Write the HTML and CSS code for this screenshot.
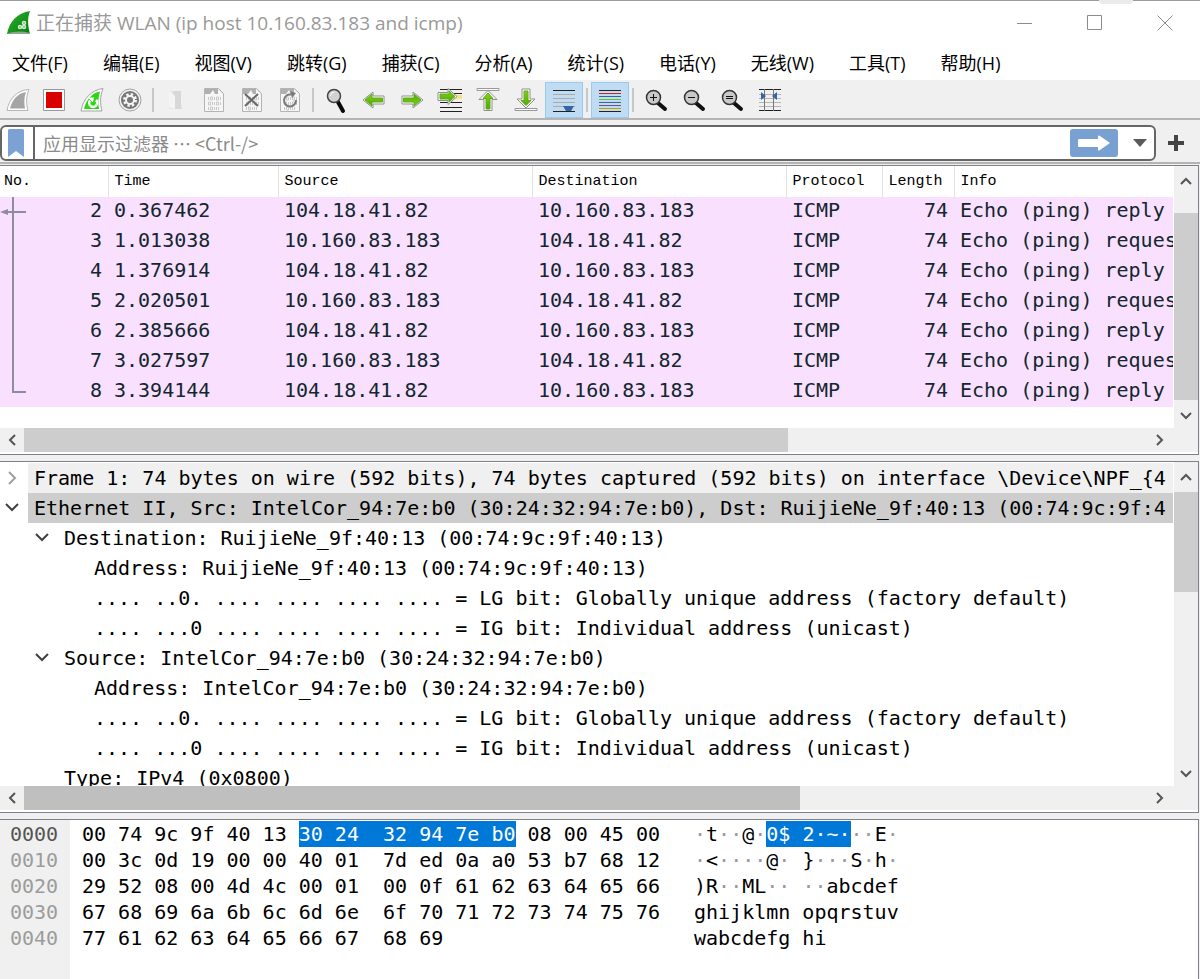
FILE: index.html
```
<!DOCTYPE html>
<html lang="zh-CN">
<head>
    <meta charset="UTF-8">
    <meta name="viewport" content="width=device-width, initial-scale=1.0">
    <title>正在捕获 WLAN</title>
    <link rel="stylesheet" href="styles.css">
</head>
<body>
    <header class="titlebar">
        <svg class="logo" width="24" height="24" viewBox="0 0 24 24">
            <defs>
                <linearGradient id="fin" x1="0" y1="0" x2="1" y2="1">
                    <stop offset="0" stop-color="#2bb52b"/>
                    <stop offset="1" stop-color="#067a10"/>
                </linearGradient>
            </defs>
            <path d="M0 23C2 11 10 2 23 0c-3 8-2 15 0 23z" fill="url(#fin)"/>
            <path d="M0 23c7-3 15-3 23-1v1z" fill="#8ca68c"/>
            <g fill="#3a9a3a" stroke="#d4ecd4" stroke-width="1.500">
                <circle cx="13" cy="16" r="1.500"/>
                <circle cx="17" cy="16" r="1.500"/>
                <circle cx="17" cy="12" r="1.500"/>
            </g>
        </svg>
        <span class="title">正在捕获 WLAN (ip host 10.160.83.183 and icmp)</span>
        <div class="window-buttons">
            <button type="button" aria-label="最小化"><svg width="16" height="16" viewBox="0 0 16 16"><path d="M0 8.500h15"/></svg></button>
            <button type="button" aria-label="最大化"><svg width="16" height="16" viewBox="0 0 16 16"><path d="M.5.5h14v14H.5z"/></svg></button>
            <button type="button" aria-label="关闭"><svg width="16" height="16" viewBox="0 0 16 16"><path d="M.5.5l15 15M15.500.5l-15 15"/></svg></button>
        </div>
        <span class="grip"></span>
    </header>

    <nav class="menu">
        <button type="button">文件(F)</button>
        <button type="button">编辑(E)</button>
        <button type="button">视图(V)</button>
        <button type="button">跳转(G)</button>
        <button type="button">捕获(C)</button>
        <button type="button">分析(A)</button>
        <button type="button">统计(S)</button>
        <button type="button">电话(Y)</button>
        <button type="button">无线(W)</button>
        <button type="button">工具(T)</button>
        <button type="button">帮助(H)</button>
    </nav>

    <!-- shared icon shapes -->
    <svg class="defs" width="0" height="0">
        <defs>
            <linearGradient id="green" x1="0" y1="0" x2="0" y2="1">
                <stop offset="0" stop-color="#86cf1c"/>
                <stop offset="1" stop-color="#4fa80c"/>
            </linearGradient>
            <symbol id="arrow" viewBox="0 0 24 24">
                <path d="M1 12L11 4v4h11v8H11v4z" fill="#fff" stroke="#8f8f8f" stroke-linejoin="round"/>
                <path d="M3 12l7-6v4h10.500v4H10v4z" fill="url(#green)" stroke="#5cae10"/>
            </symbol>
            <symbol id="doc" viewBox="0 0 24 24">
                <path d="M2.500.5h14l5 5v18h-19z" fill="#f6f6f6" stroke="#b4b4b4"/>
                <path d="M3 1h13l5 5H3z" fill="#b0b0b0"/>
                <path d="M8 6l3-4 2 4zM16 1v5h5z" fill="#f6f6f6"/>
                <path d="M6.500 9v3M8.500 9h2v3h-2zM12.500 9v3M14.500 9h2v3h-2zM18.500 9v3M6.500 14h2v3h-2zM10.500 14v3M12.500 14v3M14.500 14h2v3h-2zM18.500 14v3M6.500 19v3M8.500 19h2v3h-2zM12.500 19v3M14.500 19v3M16.500 19v3" fill="none" stroke="#c8c8c8"/>
            </symbol>
            <symbol id="lens" viewBox="0 0 24 24">
                <path d="M14 15l7 6" stroke="#111" stroke-width="4" stroke-linecap="round"/>
                <circle cx="9.500" cy="9.500" r="7" fill="#c9c9c9" stroke="#333" stroke-width="1.500"/>
            </symbol>
        </defs>
    </svg>

    <div class="toolbar">
        <button type="button" aria-label="开始捕获"><svg viewBox="0 0 24 24"><path d="M3 22.500C5 11 13 2 25 1.500c-3 7-3 14-1 21z" fill="#fff" stroke="#b5b5b5"/><path d="M6 20.500C8 12 14 5 22 4c-2 5-2 11-1 16.500z" fill="#a5a5a5"/></svg></button>
        <button type="button" aria-label="停止捕获"><svg viewBox="0 0 24 24"><path d="M1.500 1.500h21v21h-21z" fill="#fff" stroke="#999"/><path d="M4 4h16v16H4z" fill="#d90000"/></svg></button>
        <button type="button" aria-label="重新开始捕获"><svg viewBox="0 0 24 24"><path d="M1 23C3 11 11 2 23 .5c-3 8-3 15-1 22.500z" fill="#fff" stroke="#a5a5a5"/><path d="M4 21C6 12 12 5 20 3.500c-2 6-2 12-1 17.500z" fill="#2bd612"/><path d="M10 12.500a4 4 0 1 0 6-.5" fill="none" stroke="#fff" stroke-width="2.500"/><path d="M8 9.500h6l-1 5z" fill="#fff"/></svg></button>
        <button type="button" aria-label="捕获选项"><svg viewBox="0 0 24 24"><circle cx="12" cy="12" r="11" fill="#f2f2f2" stroke="#a2a2a2"/><circle cx="12" cy="12" r="9" fill="#777"/><circle cx="12" cy="12" r="5.500" fill="none" stroke="#f4f4f4" stroke-width="3" stroke-dasharray="2.320 2"/><circle cx="12" cy="12" r="4" fill="#777" stroke="#f4f4f4" stroke-width="2"/></svg></button>
        <span class="sep"></span>
        <button type="button" aria-label="打开"><svg viewBox="0 0 24 24"><path d="M5 3h9v18H5z" fill="#e8e8e8"/><path d="M9 3h8v14l1 4h-8z" fill="#d8d8d8"/><path d="M5 3l6 5v13l-6-2z" fill="#f4f4f4"/></svg></button>
        <button type="button" aria-label="保存"><svg><use href="#doc"/></svg></button>
        <button type="button" aria-label="关闭文件"><svg viewBox="0 0 24 24"><use href="#doc"/><path d="M5 6l13 12M18 6L5 18" stroke="#686868" stroke-width="2"/></svg></button>
        <button type="button" aria-label="重新加载"><svg viewBox="0 0 24 24"><use href="#doc"/><path d="M13 6.500A6 6 0 1 0 18 12" fill="none" stroke="#7a7a7a" stroke-width="2"/><path d="M12 3l6 2-4 5z" fill="#7a7a7a"/></svg></button>
        <span class="sep"></span>
        <button type="button" aria-label="查找"><svg viewBox="0 0 24 24"><path d="M14 14l5 9" stroke="#0a0a0a" stroke-width="4" stroke-linecap="round"/><circle cx="10" cy="8" r="6.500" fill="#d2d2d2" stroke="#444" stroke-width="1.500"/><path d="M6.500 8a4 4 0 0 1 4-4" fill="none" stroke="#fff"/></svg></button>
        <button type="button" aria-label="后退"><svg><use href="#arrow"/></svg></button>
        <button type="button" aria-label="前进"><svg viewBox="0 0 24 24"><use href="#arrow" transform="rotate(180 12 12)"/></svg></button>
        <button type="button" aria-label="转到分组"><svg viewBox="0 0 24 24"><path d="M2 1.500h22M2 5.500h22M2 14.500h22M2 19.500h22M2 23.500h22" stroke="#222"/><path d="M16 7h8v4h-8z" fill="#fbe27a"/><path d="M19 8.500L10 .5v4H0v8h10v4z" fill="#fff" stroke="#8f8f8f"/><path d="M17 8.500l-6-5.500v3H2v5h9v3z" fill="url(#green)" stroke="#5cae10"/></svg></button>
        <button type="button" aria-label="首个分组"><svg viewBox="0 0 24 24"><path d="M1 .5h22v2H1z" fill="#fff" stroke="#999"/><path d="M12 2.500l9 9h-5v11H8v-11H3z" fill="#fff" stroke="#8f8f8f"/><path d="M12 5l5 5.500h-3V21h-4V10.500H7z" fill="url(#green)" stroke="#5cae10"/></svg></button>
        <button type="button" aria-label="最后分组"><svg viewBox="0 0 24 24"><path d="M1 20.500h22v2H1z" fill="#fff" stroke="#999"/><path d="M12 20l9-9h-5V1H8v10H3z" fill="#fff" stroke="#8f8f8f"/><path d="M12 17.500l5-5h-3V3h-4v9.500H7z" fill="url(#green)" stroke="#5cae10"/></svg></button>
        <button type="button" class="active" aria-label="自动滚动"><svg viewBox="0 0 24 24"><path d="M1 2.500h22M1 23.500h22" stroke="#222"/><path d="M1 6.500h22M1 10.500h22M1 14.500h22M1 18.500h22" stroke="#aaaca6"/><path d="M11 18h11l-3 5h-5z" fill="#3465a4"/></svg></button>
        <span class="sep"></span>
        <button type="button" class="active" aria-label="着色"><svg viewBox="0 0 24 24"><path d="M1 2.500h22M1 23.500h22" stroke="#222"/><path d="M1 5.500h22" stroke="#d02020"/><path d="M1 8.500h22" stroke="#3465a4"/><path d="M1 11.500h22" stroke="#60c820"/><path d="M1 14.500h22" stroke="#3465a4"/><path d="M1 17.500h22" stroke="#75507b"/><path d="M1 20.500h22" stroke="#c4a000"/></svg></button>
        <span class="sep"></span>
        <button type="button" aria-label="放大"><svg viewBox="0 0 24 24"><use href="#lens"/><path d="M6 9.500h7M9.500 6v7" stroke="#111"/></svg></button>
        <button type="button" aria-label="缩小"><svg viewBox="0 0 24 24"><use href="#lens"/><path d="M6 9.500h7" stroke="#111"/></svg></button>
        <button type="button" aria-label="正常大小"><svg viewBox="0 0 24 24"><use href="#lens"/><path d="M6 8.500h7M6 10.500h7" stroke="#111"/></svg></button>
        <button type="button" aria-label="调整列宽"><svg viewBox="0 0 24 24"><path d="M1 6.500h22M1 10.500h22M1 14.500h22M1 18.500h22" stroke="#b5b8b0"/><path d="M1 1.500h22M1 22.500h22" stroke="#222"/><path d="M6.500 1v22M15.500 1v22" stroke="#777"/><path d="M3 4l5 4-5 4zM19 4l-5 4 5 4z" fill="#3465a4"/></svg></button>
    </div>

    <form class="filterbar">
        <div class="filter">
            <button type="button" class="bookmark" aria-label="书签"><svg width="16" height="28" viewBox="0 0 16 28"><path d="M0 1.500Q0 0 1.500 0h13Q16 0 16 1.500V28l-8-6-8 6z" fill="#7ba2d2"/></svg></button>
            <input type="text" aria-label="显示过滤器" placeholder="应用显示过滤器 ⋯ &lt;Ctrl-/&gt;">
            <button type="submit" class="apply" aria-label="应用"><svg width="32" height="16" viewBox="0 0 32 16"><path d="M1 4h19V1q0-1 2 0l10 7-10 7q-2 1-2 0v-3H1q-1 0-1-1V5q0-1 1-1z" fill="#fff"/></svg></button>
            <button type="button" class="history" aria-label="历史"><svg width="14" height="8" viewBox="0 0 14 8"><path d="M0 0h14L7 8z" fill="#5a5a5a"/></svg></button>
        </div>
        <button type="button" class="add" aria-label="添加"><svg width="16" height="16" viewBox="0 0 16 16"><path d="M0 8h16M8 0v16" stroke="#444" stroke-width="4"/></svg></button>
    </form>

    <section class="pane packets">
        <div class="view">
            <table>
                <colgroup>
                    <col class="c-no"><col class="c-time"><col class="c-addr"><col class="c-addr"><col class="c-proto"><col class="c-len"><col>
                </colgroup>
                <thead>
                    <tr><th>No.</th><th>Time</th><th>Source</th><th>Destination</th><th>Protocol</th><th>Length</th><th>Info</th></tr>
                </thead>
                <tbody>
                    <tr><td>2</td><td>0.367462</td><td>104.18.41.82</td><td>10.160.83.183</td><td>ICMP</td><td>74</td><td>Echo (ping) reply</td></tr>
                    <tr><td>3</td><td>1.013038</td><td>10.160.83.183</td><td>104.18.41.82</td><td>ICMP</td><td>74</td><td>Echo (ping) request</td></tr>
                    <tr><td>4</td><td>1.376914</td><td>104.18.41.82</td><td>10.160.83.183</td><td>ICMP</td><td>74</td><td>Echo (ping) reply</td></tr>
                    <tr><td>5</td><td>2.020501</td><td>10.160.83.183</td><td>104.18.41.82</td><td>ICMP</td><td>74</td><td>Echo (ping) request</td></tr>
                    <tr><td>6</td><td>2.385666</td><td>104.18.41.82</td><td>10.160.83.183</td><td>ICMP</td><td>74</td><td>Echo (ping) reply</td></tr>
                    <tr><td>7</td><td>3.027597</td><td>10.160.83.183</td><td>104.18.41.82</td><td>ICMP</td><td>74</td><td>Echo (ping) request</td></tr>
                    <tr><td>8</td><td>3.394144</td><td>104.18.41.82</td><td>10.160.83.183</td><td>ICMP</td><td>74</td><td>Echo (ping) reply</td></tr>
                </tbody>
            </table>
            <svg class="related" width="27" height="210" viewBox="0 0 27 210"><path d="M13 0v195h13M6 15h20" fill="none" stroke="#8f8c9e" stroke-width="2"/><path d="M0 15l8-3v6z" fill="#8f8c9e"/></svg>
        </div>
        <div class="vbar">
            <button type="button" aria-label="上"><svg width="12" height="8" viewBox="0 0 12 8"><path d="M1 7l5-5 5 5"/></svg></button>
            <div class="track"><div class="thumb" style="margin-top: 17px; height: 90%"></div></div>
            <button type="button" aria-label="下"><svg width="12" height="8" viewBox="0 0 12 8"><path d="M1 1l5 5 5-5"/></svg></button>
        </div>
        <div class="hbar">
            <button type="button" aria-label="左"><svg width="8" height="12" viewBox="0 0 8 12"><path d="M7 1L2 6l5 5"/></svg></button>
            <div class="track"><div class="thumb" style="width: 68%"></div></div>
            <button type="button" aria-label="右"><svg width="8" height="12" viewBox="0 0 8 12"><path d="M1 1l5 5-5 5"/></svg></button>
        </div>
    </section>

    <section class="pane details">
        <div class="view">
            <ul class="tree">
                <li class="shaded"><button type="button" class="closed" aria-label="展开"><svg width="14" height="14" viewBox="0 0 14 14"><path d="M4 1l6 6-6 6"/></svg></button><span>Frame 1: 74 bytes on wire (592 bits), 74 bytes captured (592 bits) on interface \Device\NPF_{4</span></li>
                <li class="selected"><button type="button" aria-label="折叠"><svg width="14" height="14" viewBox="0 0 14 14"><path d="M1 3l6 6 6-6"/></svg></button><span>Ethernet II, Src: IntelCor_94:7e:b0 (30:24:32:94:7e:b0), Dst: RuijieNe_9f:40:13 (00:74:9c:9f:4</span></li>
                <li class="level2"><button type="button" aria-label="折叠"><svg width="14" height="14" viewBox="0 0 14 14"><path d="M1 3l6 6 6-6"/></svg></button><span>Destination: RuijieNe_9f:40:13 (00:74:9c:9f:40:13)</span></li>
                <li class="level3"><span>Address: RuijieNe_9f:40:13 (00:74:9c:9f:40:13)</span></li>
                <li class="level3"><span>.... ..0. .... .... .... .... = LG bit: Globally unique address (factory default)</span></li>
                <li class="level3"><span>.... ...0 .... .... .... .... = IG bit: Individual address (unicast)</span></li>
                <li class="level2"><button type="button" aria-label="折叠"><svg width="14" height="14" viewBox="0 0 14 14"><path d="M1 3l6 6 6-6"/></svg></button><span>Source: IntelCor_94:7e:b0 (30:24:32:94:7e:b0)</span></li>
                <li class="level3"><span>Address: IntelCor_94:7e:b0 (30:24:32:94:7e:b0)</span></li>
                <li class="level3"><span>.... ..0. .... .... .... .... = LG bit: Globally unique address (factory default)</span></li>
                <li class="level3"><span>.... ...0 .... .... .... .... = IG bit: Individual address (unicast)</span></li>
                <li class="leaf"><span>Type: IPv4 (0x0800)</span></li>
            </ul>
        </div>
        <div class="vbar">
            <button type="button" aria-label="上"><svg width="12" height="8" viewBox="0 0 12 8"><path d="M1 7l5-5 5 5"/></svg></button>
            <div class="track"><div class="thumb" style="height: 37%"></div></div>
            <button type="button" aria-label="下"><svg width="12" height="8" viewBox="0 0 12 8"><path d="M1 1l5 5 5-5"/></svg></button>
        </div>
        <div class="hbar">
            <button type="button" aria-label="左"><svg width="8" height="12" viewBox="0 0 8 12"><path d="M7 1L2 6l5 5"/></svg></button>
            <div class="track"><div class="thumb hover" style="width: 69%"></div></div>
            <button type="button" aria-label="右"><svg width="8" height="12" viewBox="0 0 8 12"><path d="M1 1l5 5-5 5"/></svg></button>
        </div>
    </section>

    <section class="bytes">
<pre class="offsets"><b>0000</b>
0010
0020
0030
0040</pre>
<pre class="hex">00 74 9c 9f 40 13 <mark>30 24  32 94 7e b0</mark> 08 00 45 00
00 3c 0d 19 00 00 40 01  7d ed 0a a0 53 b7 68 12
29 52 08 00 4d 4c 00 01  00 0f 61 62 63 64 65 66
67 68 69 6a 6b 6c 6d 6e  6f 70 71 72 73 74 75 76
77 61 62 63 64 65 66 67  68 69</pre>
<pre class="ascii"><i>·</i>t<i>··</i>@<i>·</i><mark>0$ 2·~·</mark><i>··</i>E<i>·</i>
<i>·</i>&lt;<i>····</i>@<i>·</i> }<i>···</i>S<i>·</i>h<i>·</i>
)R<i>··</i>ML<i>··</i> <i>··</i>abcdef
ghijklmn opqrstuv
wabcdefg hi</pre>
    </section>
</body>
</html>
```
FILE: styles.css
```
* { box-sizing: border-box; }
body { margin: 0; height: 100vh; display: flex; flex-direction: column; overflow: hidden; background: #f0f0f0; color: #000; font-family: "Open Sans", "Noto Sans CJK SC", sans-serif; font-size: 18px; }
button { display: flex; align-items: center; justify-content: center; margin: 0; padding: 0; border: 0; background: none; color: inherit; font: inherit; }
svg { display: block; flex: none; }
.defs { position: absolute; }

.titlebar { position: relative; display: flex; align-items: center; gap: 5px; height: 44px; padding-left: 7px; border-top: 1px solid #9c9c9c; background: #fff; color: #999; }
.title { flex: 1; padding-bottom: 2px; font-size: 19px; white-space: nowrap; }
.window-buttons { display: flex; }
.window-buttons button { width: 70px; height: 43px; }
.window-buttons path { fill: none; stroke: #8c8c8c; }
.grip { position: absolute; top: -1px; right: 67px; width: 34px; height: 4px; border-radius: 0 0 17px 17px; background: #ebebeb; }

.menu { display: flex; gap: 35px; height: 38px; padding: 0 12px; border-bottom: 2px solid #f0f0f0; background: #fff; }
.menu button { white-space: nowrap; }

.toolbar { display: flex; align-items: center; height: 38px; margin-left: -3px; border-bottom: 2px solid #b4b4b4; }
.toolbar button { width: 38px; height: 36px; }
.toolbar svg { width: 24px; height: 24px; overflow: visible; }
.toolbar .active { border: 1px solid #99c9ef; background: #c0dcf3; }
.sep { width: 8px; height: 24px; border-left: 3px solid transparent; background: linear-gradient(#c8c8c8, #c8c8c8) no-repeat padding-box 0 0 / 2px 100%; }

.filterbar { display: flex; align-items: flex-start; height: 44px; padding-top: 5px; border-bottom: 2px solid #b4b4b4; }
.filter { flex: 1; display: flex; align-items: center; height: 36px; border: 2px solid #666; border-radius: 6px; background: #fff; }
.bookmark { width: 33px; height: 32px; border-right: 2px solid #666; padding-right: 3px; }
.filter input { flex: 1; min-width: 0; height: 30px; padding: 0 8px; border: 0; outline: 0; background: none; font-family: "Noto Sans CJK SC", sans-serif; font-size: 18px; }
.filter input::placeholder { color: #8a8a8a; opacity: 1; }
.apply { width: 48px; height: 28px; border-radius: 3px; background: #78a0d0; }
.history { width: 36px; padding-left: 8px; }
.add { width: 44px; height: 36px; padding-right: 4px; }

/* scrolling panes */
.pane { display: grid; grid-template-columns: minmax(0, 1fr) 24px; grid-template-rows: minmax(0, 1fr) 24px; flex: none; margin-right: 1px; padding-bottom: 2px; border: 1px solid #80808a; border-left: 0; background: #fff; }
.packets { margin-top: 1px; }
.details { flex: 1; min-height: 0; margin-top: 6px; }
.view { grid-row: 1; grid-column: 1; position: relative; overflow: hidden; margin-right: 1px; font-family: "DejaVu Sans Mono", monospace; font-size: 20px; }
.vbar { grid-row: 1; grid-column: 2; display: flex; flex-direction: column; background: #f0f0f0; }
.hbar { grid-row: 2; grid-column: 1 / 3; display: flex; padding-right: 26px; background: #f0f0f0; }
.vbar button, .hbar button { width: 24px; height: 24px; }
.vbar path, .hbar path { fill: none; stroke: #555; stroke-width: 2; }
.vbar button:first-child { height: 30px; }
.track { flex: 1; }
.hbar .thumb { height: 24px; }
.thumb { background: #cdcdcd; }
.thumb.hover { background: #bfbfbf; }

table { width: 100%; margin-bottom: 21px; border-collapse: collapse; table-layout: fixed; }
.c-no { width: 108px; }
.c-time { width: 170px; }
.c-addr { width: 254px; }
.c-proto { width: 96px; }
.c-len { width: 72px; }
th, td { padding: 0 6px; overflow: hidden; white-space: nowrap; text-align: left; }
th { height: 31px; border-right: 1px solid #e2e2e2; font-family: "Liberation Mono", monospace; font-size: 15px; font-weight: normal; }
th:first-child { padding-left: 4px; }
th:last-child { border-right: 0; }
td { height: 30px; padding-bottom: 4px; background: #fae0ff; color: #12272e; line-height: 26px; }
td:first-child, td:nth-child(6) { text-align: right; }
td:last-child { padding-right: 0; text-overflow: clip; }
.related { position: absolute; top: 31px; left: 0; }

.tree { margin: 0; padding: 1px 0 0; list-style: none; }
.tree li { display: flex; height: 30px; line-height: 30px; white-space: nowrap; }
.tree button { width: 28px; height: 30px; padding-right: 5px; }
.tree path { fill: none; stroke: #404040; stroke-width: 2; }
.tree .closed path { stroke: #a0a0a0; }
.tree span { flex: 1; padding-left: 6px; }
.shaded span { background: #f0f0f0; }
.selected span { background: #cdcdcd; }
.tree .level2 { padding-left: 30px; }
.tree .level3 { padding-left: 88px; }
.tree .leaf { padding-left: 58px; }

.bytes { display: flex; flex: none; margin: 6px 1px 0 0; border-top: 1px solid #80808a; border-right: 1px solid #80808a; background: #fff; }
.bytes pre { margin: 0; padding: 1px 0 28px; font-family: "DejaVu Sans Mono", monospace; font-size: 20px; line-height: 26px; }
.bytes .offsets { width: 70px; padding-left: 10px; background: #f0f0f0; color: #9c9c9c; }
.offsets b { color: #555; font-weight: normal; }
.bytes .hex { width: 624px; padding-left: 12px; }
.bytes mark { display: inline-block; height: 26px; background: #0078d7; color: #fff; vertical-align: top; }
.bytes i { color: #999; font-style: normal; }
```
